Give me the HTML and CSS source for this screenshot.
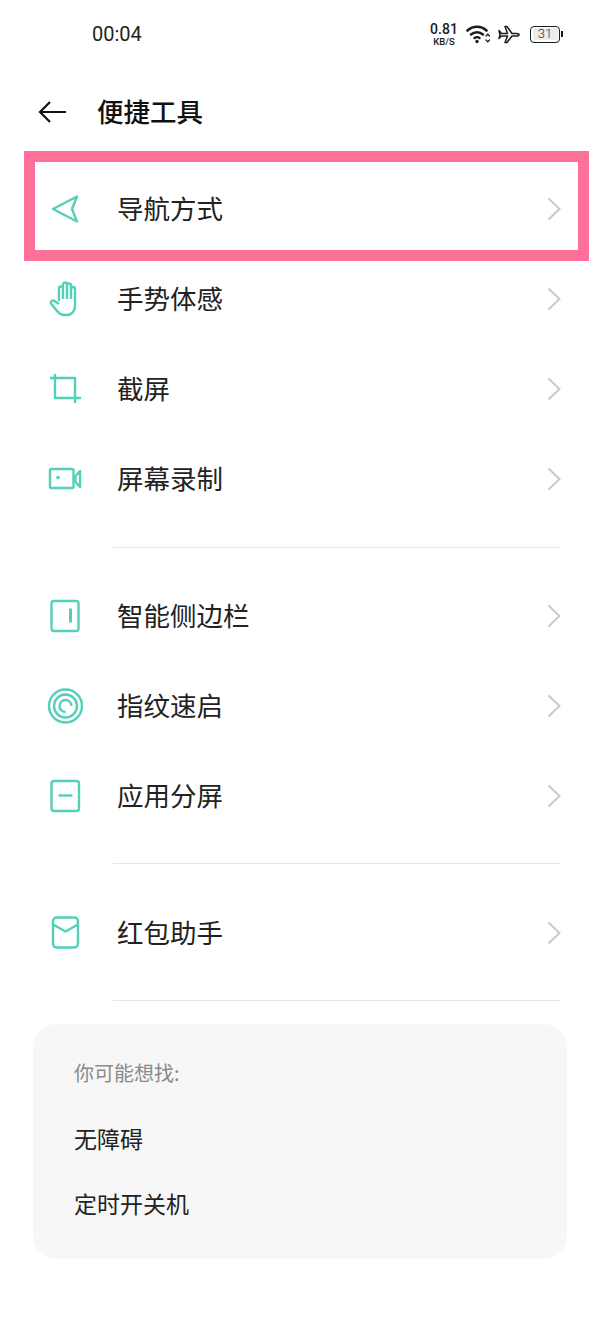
FILE: index.html
```html
<!DOCTYPE html>
<html lang="zh-CN">
<head>
    <meta charset="UTF-8">
    <title>便捷工具</title>
    <link rel="stylesheet" href="styles.css">
</head>
<body>
<div class="status">
    <span class="time">00:04</span>
    <div class="status-right">
        <div class="speed"><b>0.81</b><small>KB/S</small></div>
        <svg class="wifi" width="24" height="20" viewBox="0 0 24 20" fill="none" stroke="#1c1c1c" stroke-linecap="round">
            <path d="M1.500 6.500C7 1.500 15 1.500 20.500 6.500" stroke-width="2.600"/>
            <path d="M5 10.500C8.500 7.500 13.500 7.500 17 10.500" stroke-width="2.500"/>
            <path d="M8.500 14C10 13 12 13 13.500 14" stroke-width="2.300"/>
            <circle cx="11" cy="17.500" r="1.700" fill="#1c1c1c" stroke="none"/>
            <path d="M20 12l1.800-1.800 1.800 1.800M20 16l1.800 1.800 1.800-1.800" stroke-width="1.300"/>
        </svg>
        <svg class="plane" width="22" height="20" viewBox="0 0 22 20" fill="none" stroke="#1c1c1c" stroke-width="1.500" stroke-linejoin="round">
            <path d="M1 6.500l2.500 3h6L7 2.500h2l5 7h4.500c1.500 0 2.500.6 2.500 1.200s-1 1.300-2.500 1.300H14l-5 6.500H7l2.500-6.500h-6L1 14.500l1-3.500z"/>
        </svg>
        <div class="battery"><span class="battery-level">31</span></div>
    </div>
</div>

<div class="head">
    <svg class="back" width="28" height="22" viewBox="0 0 28 22" fill="none" stroke="#111" stroke-width="2.200">
        <path d="M12 1L2 11l10 10M2 11h26"/>
    </svg>
    <h1>便捷工具</h1>
</div>

<div class="group">
    <div class="row">
        <svg class="ico" width="36" height="36" viewBox="0 0 36 36" fill="none">
            <path d="M6 18L30 5.500 25 18l5 12.500z"/>
        </svg>
        <span class="name">导航方式</span>
        <svg class="arrow" width="14" height="24" viewBox="0 0 14 24" fill="none"><path d="M1.500 1.500L12.500 12 1.500 22.500"/></svg>
        <div class="mark"></div>
    </div>
    <div class="row">
        <svg class="ico" width="36" height="36" viewBox="0 0 36 36" fill="none">
            <path d="M12 20V7.500a2 2 0 0 1 4 0V18M16 18V3.500a2 2 0 0 1 4 0V18M20 18V4.500a2 2 0 0 1 4 0V18M24 18V8a2 2 0 0 1 4 0v17c0 5-3.500 9-8 9h-3c-3 0-5-1.500-7-4l-6-7.500c-1-1.500 1-4 3.500-2.500L12 23"/>
        </svg>
        <span class="name">手势体感</span>
        <svg class="arrow" width="14" height="24" viewBox="0 0 14 24" fill="none"><path d="M1.500 1.500L12.500 12 1.500 22.500"/></svg>
    </div>
    <div class="row">
        <svg class="ico" width="36" height="36" viewBox="0 0 36 36" fill="none">
            <path d="M8 3v24h26M3 7h25v25"/>
        </svg>
        <span class="name">截屏</span>
        <svg class="arrow" width="14" height="24" viewBox="0 0 14 24" fill="none"><path d="M1.500 1.500L12.500 12 1.500 22.500"/></svg>
    </div>
    <div class="row">
        <svg class="ico" width="36" height="36" viewBox="0 0 36 36" fill="none">
            <rect x="3" y="8" width="23.500" height="19" rx="1.500"/>
            <path d="M28.500 15l4.500-5v16l-4.500-5z"/>
            <circle cx="11" cy="16.500" r="1.800" fill="#54cfba" stroke="none"/>
        </svg>
        <span class="name">屏幕录制</span>
        <svg class="arrow" width="14" height="24" viewBox="0 0 14 24" fill="none"><path d="M1.500 1.500L12.500 12 1.500 22.500"/></svg>
    </div>
</div>
<div class="line line-first"></div>

<div class="group">
    <div class="row">
        <svg class="ico" width="36" height="36" viewBox="0 0 36 36" fill="none">
            <rect x="4.500" y="3" width="27" height="30" rx="2.500"/>
            <path d="M23.500 10.500v14" stroke-width="3"/>
        </svg>
        <span class="name">智能侧边栏</span>
        <svg class="arrow" width="14" height="24" viewBox="0 0 14 24" fill="none"><path d="M1.500 1.500L12.500 12 1.500 22.500"/></svg>
    </div>
    <div class="row">
        <svg class="ico" width="36" height="36" viewBox="0 0 36 36" fill="none">
            <circle cx="18.500" cy="18" r="16.500"/>
            <circle cx="18.500" cy="18" r="11.500"/>
            <path d="M18.500 24a6 6 0 1 1 6-6"/>
        </svg>
        <span class="name">指纹速启</span>
        <svg class="arrow" width="14" height="24" viewBox="0 0 14 24" fill="none"><path d="M1.500 1.500L12.500 12 1.500 22.500"/></svg>
    </div>
    <div class="row">
        <svg class="ico" width="36" height="36" viewBox="0 0 36 36" fill="none">
            <rect x="4.500" y="3" width="27.500" height="30" rx="2.500"/>
            <path d="M11.500 17.500h14"/>
        </svg>
        <span class="name">应用分屏</span>
        <svg class="arrow" width="14" height="24" viewBox="0 0 14 24" fill="none"><path d="M1.500 1.500L12.500 12 1.500 22.500"/></svg>
    </div>
</div>
<div class="line line-second"></div>

<div class="group">
    <div class="row">
        <svg class="ico" width="36" height="36" viewBox="0 0 36 36" fill="none">
            <rect x="6" y="2.500" width="25" height="30" rx="3.500"/>
            <path d="M6 9.500l12.500 7 12.500-7"/>
        </svg>
        <span class="name">红包助手</span>
        <svg class="arrow" width="14" height="24" viewBox="0 0 14 24" fill="none"><path d="M1.500 1.500L12.500 12 1.500 22.500"/></svg>
    </div>
</div>
<div class="line"></div>

<div class="card">
    <p class="card-title">你可能想找:</p>
    <p class="card-link">无障碍</p>
    <p class="card-link">定时开关机</p>
</div>
</body>
</html>
```

FILE: styles.css
```css
* {margin: 0; padding: 0; box-sizing: border-box;}
body {width: 600px; height: 1340px; background: #fff; overflow: hidden; color: #1a1a1a; font-family: "Noto Sans CJK SC", "Liberation Sans", sans-serif;}

.status {display: flex; align-items: center; justify-content: space-between; height: 68px; padding: 0 38px 0 92px;}
.time {font-family: "Roboto", sans-serif; font-size: 20px; color: #222;}
.status-right {display: flex; align-items: center; gap: 8px;}
.speed {display: flex; flex-direction: column; align-items: center; width: 28px; margin: 3px 0 0 0; font-family: "Roboto", sans-serif; color: #1c1c1c;}
.speed b {font-size: 14px; font-weight: 500; line-height: 12px;}
.speed small {font-size: 9.500px; font-weight: 500; line-height: 13px;}
.battery {position: relative; width: 30px; height: 17px; margin: 0 2px; border: 1.500px solid #1c1c1c; border-radius: 4px; padding: 1.500px;}
.battery::after {content: ""; position: absolute; right: -4px; top: 4px; width: 2px; height: 6px; background: #1c1c1c;}
.battery-level {display: block; height: 100%; background: #ececec; border-radius: 2px; font-family: "Roboto", sans-serif; font-size: 13px; font-weight: 300; line-height: 11px; text-align: center; color: #333;}

.head {display: flex; align-items: center; gap: 32px; height: 96px; padding: 0 0 11px 38px;}
.head h1 {font-size: 26.500px; font-weight: 500; line-height: 36px; color: #111; margin-left: -1px;}
.back {margin-top: 2px;}

.group {display: flex; flex-direction: column;}
.row {position: relative; display: flex; align-items: center; height: 90px; padding: 0 39px 0 47px;}
.ico {flex: none; margin-right: 34px; stroke: #54cfba; stroke-width: 2.400; stroke-linejoin: round;}
.name {flex: 1; font-size: 26.500px; line-height: 36px; padding-bottom: 3px; color: #222; box-sizing: content-box;}
.arrow {flex: none; stroke: #c9c9c9; stroke-width: 2;}
.mark {position: absolute; left: 24px; top: -13px; width: 565px; height: 110px; border: 11px solid #fe6f9a;}

.line {height: 1px; margin: 22px 40px 23px 113px; background: #e6e6e6;}
.line-first {margin-top: 23px;}
.line-second {margin-bottom: 24px;}

.card {width: 534px; height: 235px; margin: 0 0 0 33px; padding: 35px 41px 0; background: #f7f7f7; border-radius: 24px;}
.card-title {font-size: 20px; line-height: 28px; color: #8a8a8a;}
.card-link {margin-top: 37px; font-size: 23px; line-height: 28px; color: #222;}
```
